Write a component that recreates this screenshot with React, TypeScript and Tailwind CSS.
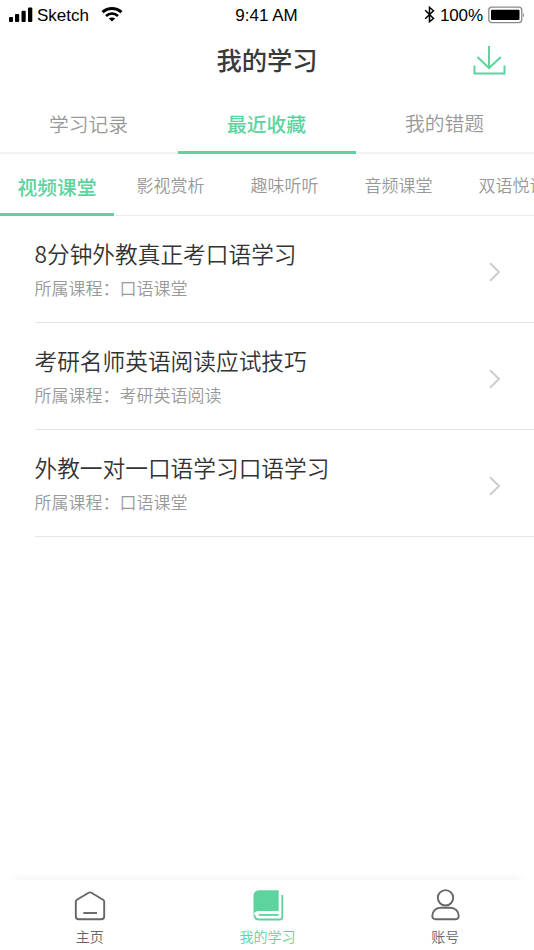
import clsx from "clsx";

const tabs = ["学习记录", "最近收藏", "我的错题"];

const categories = ["视频课堂", "影视赏析", "趣味听听", "音频课堂", "双语悦读"];

const courses = [
  { title: "8分钟外教真正考口语学习", course: "口语课堂" },
  { title: "考研名师英语阅读应试技巧", course: "考研英语阅读" },
  { title: "外教一对一口语学习口语学习", course: "口语课堂" },
];

function StatusBar() {
  return (
    <div className="flex h-8 items-center justify-between pl-2 pr-[9px] font-['Liberation_Sans','Noto_Sans_CJK_SC',sans-serif] text-[17px] leading-8 text-black">
      <div className="flex flex-1 items-center">
        <svg width="26" height="32" viewBox="0 0 26 32">
          <rect x="1" y="17" width="4" height="5" rx="1" />
          <rect x="7" y="14" width="4.2" height="8" rx="1" />
          <rect x="13.5" y="10.7" width="4.2" height="11.3" rx="1" />
          <rect x="20" y="7.5" width="4.3" height="14.5" rx="1" />
        </svg>
        <span className="ml-[3px]">Sketch</span>
        <svg className="ml-3" width="22" height="32" viewBox="0 0 22 32" fill="none" stroke="#000">
          <path d="M1.5 12.2C7 7.2 15 7.2 20.5 12.2" strokeWidth="3" />
          <path d="M5 15.9C8.6 12.7 13.4 12.7 17 15.9" strokeWidth="2.7" />
          <path d="M11 21.5L7.8 18.5C9.8 17.2 12.2 17.2 14.2 18.5Z" fill="#000" stroke="none" />
        </svg>
      </div>
      <span>9:41 AM</span>
      <div className="flex flex-1 items-center justify-end">
        <svg width="12" height="32" viewBox="0 0 12 32" fill="none" stroke="#000" strokeWidth="1.5">
          <path d="M1.2 10.3L9.5 18.5L5.5 21.7V7.3L9.5 10.7L1.2 18.8" />
        </svg>
        <span className="ml-1 tracking-[-0.1px]">100%</span>
        <svg className="ml-[5px]" width="37" height="32" viewBox="0 0 37 32">
          <rect x="0.8" y="7.2" width="33" height="15.4" rx="3" fill="none" stroke="#8a8a8a" strokeWidth="1.3" />
          <rect x="3" y="9.7" width="28.5" height="10.4" rx="1" />
          <path d="M35 12.7Q37 15 35 17.3Z" fill="#8a8a8a" />
        </svg>
      </div>
    </div>
  );
}

function Header() {
  return (
    <header className="grid h-[64px] grid-cols-3 items-center">
      <h1 className="col-start-2 -mt-[11px] text-center text-[25.3px] font-medium leading-10 text-[#3a3a3a]">
        我的学习
      </h1>
      <svg className="-mt-[6px] mr-7 justify-self-end" width="34" height="32" viewBox="0 0 34 32" fill="none" stroke="#5dd39e" strokeWidth="2">
        <path d="M17 1V23M5.5 12L17 23L28.8 12M2.5 20.5V28.5H32.5V20.5" />
      </svg>
    </header>
  );
}

function Tabs() {
  return (
    <nav className="flex h-[58px] border-b-2 border-[#f2f2f2]">
      {tabs.map((tab, i) => (
        <button
          key={tab}
          className={clsx(
            "-mb-[2px] flex-1 border-b-[3px] pr-px text-[19.8px] leading-[54px]",
            i === 1 ? "border-[#5dd39e] font-medium text-[#5dd39e]" : "border-transparent font-[350] text-[#999]",
            i === 2 && "-mt-[2px]"
          )}
        >
          {tab}
        </button>
      ))}
    </nav>
  );
}

function Categories() {
  return (
    <nav className="flex h-[62px] overflow-hidden">
      {categories.map((name, i) => (
        <button
          key={name}
          className={clsx(
            "h-full w-[114px] shrink-0 whitespace-nowrap",
            i === 0
              ? "border-b-[3px] border-[#5dd39e] pt-[6px] text-[19.8px] font-medium text-[#5dd39e]"
              : "border-b border-[#ebebeb] pr-px text-[17px] font-[350] text-[#999]"
          )}
        >
          {name}
        </button>
      ))}
    </nav>
  );
}

function CourseList() {
  return (
    <ul className="pl-[34.5px]">
      {courses.map((item) => (
        <li key={item.title} className="flex h-[107px] items-center justify-between border-b border-[#e5e5e5] pr-[33px]">
          <div className="pt-[3px] font-[350]">
            <div className="text-[22.7px] leading-[34px] text-[#333]">{item.title}</div>
            <div className="mt-px text-[17px] leading-8 text-[#999]">
              所属课程：{item.course}
            </div>
          </div>
          <svg className="mt-[5px]" width="13" height="20" viewBox="0 0 13 20" fill="none" stroke="#ccc" strokeWidth="2">
            <path d="M2 1.2L11 10L2 18.8" />
          </svg>
        </li>
      ))}
    </ul>
  );
}

function HomeIcon() {
  return (
    <svg width="34" height="34" viewBox="0 0 34 34" fill="none" stroke="#666" strokeWidth="1.9" strokeLinejoin="round">
      <path d="M15.6 3.8Q17 3 18.4 3.8L30.1 10.8Q31.2 11.5 31.2 12.7V27.2Q31.2 30.2 28.2 30.2H5.8Q2.8 30.2 2.8 27.2V12.7Q2.8 11.5 3.9 10.8Z" />
      <path d="M10.3 24H24" />
    </svg>
  );
}

function BookIcon() {
  return (
    <svg width="34" height="34" viewBox="0 0 34 34">
      <path d="M8.5 1.3H27.7V22H7Q4.2 22 3 24.5L2.5 26V7.5Q2.5 1.3 8.5 1.3Z" fill="#5dd39e" />
      <path d="M3.4 25.5Q3.4 30.5 8 30.5H28.7Q31.3 30.5 31.3 27.9V6" fill="none" stroke="#5dd39e" strokeWidth="1.8" />
      <path d="M7.7 25.9H27.7" stroke="#5dd39e" strokeWidth="1.8" />
    </svg>
  );
}

function UserIcon() {
  return (
    <svg width="34" height="34" viewBox="0 0 34 34" fill="none" stroke="#666" strokeWidth="1.9">
      <circle cx="17.5" cy="8.8" r="7.7" />
      <path d="M12.3 18.7H22.3C27.3 18.7 30.7 22.3 30.7 26.8Q30.7 30.3 27.2 30.3H7.8Q4.3 30.3 4.3 26.8C4.3 22.3 7.8 18.7 12.3 18.7Z" />
    </svg>
  );
}

function BottomNav() {
  const items = [
    { label: "主页", icon: <HomeIcon />, active: false },
    { label: "我的学习", icon: <BookIcon />, active: true },
    { label: "账号", icon: <UserIcon />, active: false },
  ];

  return (
    <footer className="mt-auto h-[70px] bg-white shadow-[0_-14px_10px_-14px_rgba(0,0,0,0.07)]">
      <div className="flex pl-px pt-[9px]">
        {items.map((item) => (
          <button
            key={item.label}
            className={clsx(
              "flex flex-1 flex-col items-center text-[14px] font-[350] leading-[26px]",
              item.active ? "text-[#5dd39e]" : "text-[#666]"
            )}
          >
            {item.icon}
            {item.label}
          </button>
        ))}
      </div>
    </footer>
  );
}

function App() {
  return (
    <div className="flex h-[950px] w-[534px] flex-col overflow-hidden bg-white font-['Noto_Sans_CJK_SC',sans-serif]">
      <StatusBar />
      <Header />
      <Tabs />
      <Categories />
      <CourseList />
      <BottomNav />
    </div>
  );
}

export default App;
